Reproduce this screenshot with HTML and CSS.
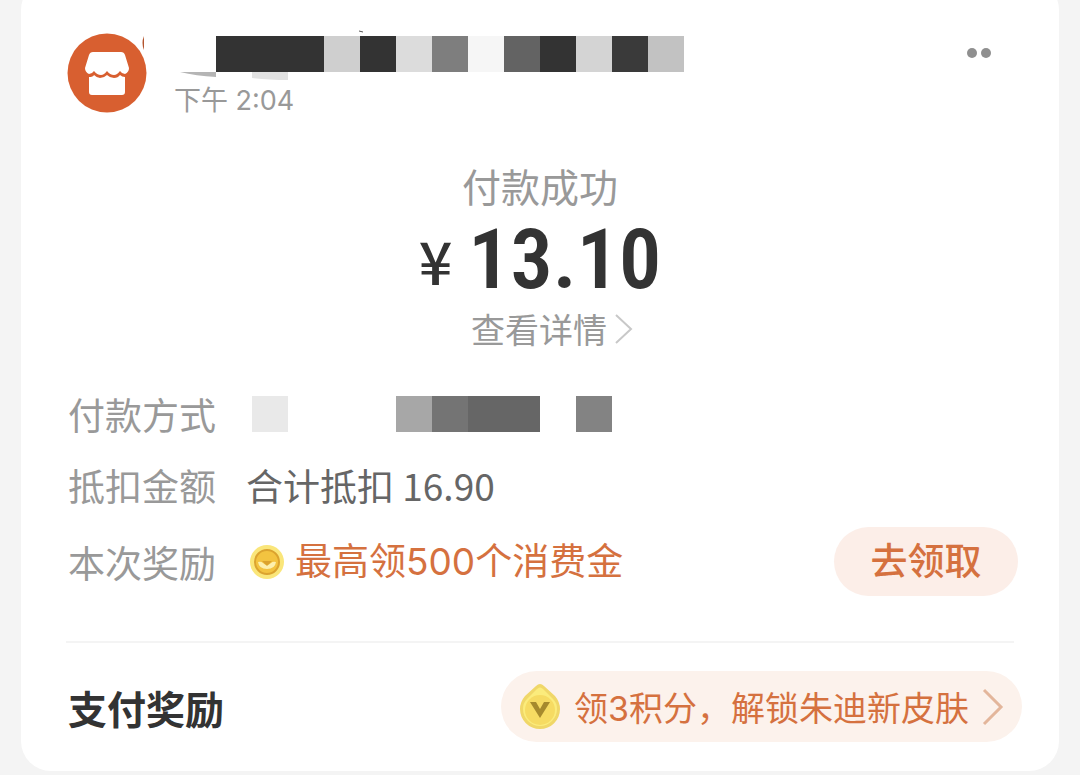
FILE: index.html
```html
<!DOCTYPE html>
<html lang="zh-CN">
<head>
    <meta charset="UTF-8">
    <meta name="viewport" content="width=device-width, initial-scale=1.0">
    <title>付款成功</title>
    <link rel="stylesheet" href="styles.css">
</head>
<body>

<main class="card">
    <header class="shop">
        <svg class="shop-logo" viewBox="0 0 80 80" aria-hidden="true">
            <circle cx="40" cy="40" r="39.5" fill="#d85f30"/>
            <path d="M26 19h28q3 0 4 3l4 13q0 4-4 6-3 0-5-3-3 4-6 4-4 0-7-4-3 4-6 4-4 0-7-4-2 3-5 3-4-2-4-6l4-13q1-3 4-3z" fill="#fff"/>
            <path d="M22 44q4 0 5-2 3 3 6 3 4 0 7-3 3 3 7 3t6-3q2 2 5 2v15q0 3-3 3H25q-3 0-3-3z" fill="#fff"/>
        </svg>
        <div class="shop-info">
            <!-- 商家名称打码 -->
            <svg class="shop-name" viewBox="0 0 510 36" role="img" aria-label="商家名称已隐藏">
                <g shape-rendering="crispEdges">
                    <rect x="42" width="108" height="36" fill="#333"/>
                    <rect x="150" width="36" height="36" fill="#cfcfcf"/>
                    <rect x="186" width="36" height="36" fill="#333"/>
                    <rect x="222" width="36" height="36" fill="#dcdcdc"/>
                    <rect x="258" width="36" height="36" fill="#7e7e7e"/>
                    <rect x="294" width="36" height="36" fill="#f6f6f6"/>
                    <rect x="330" width="36" height="36" fill="#636363"/>
                    <rect x="366" width="36" height="36" fill="#333"/>
                    <rect x="402" width="36" height="36" fill="#d4d4d4"/>
                    <rect x="438" width="36" height="36" fill="#3a3a3a"/>
                    <rect x="474" width="36" height="36" fill="#c2c2c2"/>
                </g>
                <path d="M-30 0v14q-3-7 0-14z" fill="#b4552f"/>
                <path d="M6 36h36v5q-20-1-36-5z" fill="#b5b5b5"/>
                <path d="M78 36h36v8q-20 0-36-2z" fill="#e2e2e2"/>
                <path d="M185-5l4 1" stroke="#555"/>
            </svg>
            <time class="shop-time">下午 2:04</time>
        </div>
        <button class="more" type="button" aria-label="更多">
            <i></i><i></i>
        </button>
    </header>

    <section class="pay">
        <h1 class="pay-status">付款成功</h1>
        <p class="pay-amount"><span class="yen">¥</span><span class="num">13.10</span></p>
        <a class="pay-detail" href="#">查看详情<svg viewBox="0 0 18 32" aria-hidden="true"><path d="M1 2l15 14L1 30"/></svg></a>
    </section>

    <dl class="rows">
        <div class="row">
            <dt>付款方式</dt>
            <dd>
                <svg class="pay-method" viewBox="0 0 360 36" role="img" aria-label="付款方式已隐藏" shape-rendering="crispEdges">
                    <rect width="36" height="36" fill="#e9e9e9"/>
                    <rect x="144" width="36" height="36" fill="#a7a7a7"/>
                    <rect x="180" width="36" height="36" fill="#747474"/>
                    <rect x="216" width="72" height="36" fill="#666"/>
                    <rect x="324" width="36" height="36" fill="#838383"/>
                </svg>
            </dd>
        </div>
        <div class="row">
            <dt>抵扣金额</dt>
            <dd class="deduct">合计抵扣 16.90</dd>
        </div>
        <div class="row row-reward">
            <dt>本次奖励</dt>
            <dd class="reward">
                <svg class="coin" viewBox="0 0 36 36" aria-hidden="true">
                    <circle cx="18" cy="18" r="17" fill="#fae67a"/>
                    <circle cx="18" cy="18" r="12" fill="#f3c340" stroke="#dba32f" stroke-width="2"/>
                    <path d="M9 18q3-1 5 1 4 4 8 0 2-2 5-1-1 7-9 7t-9-7z" fill="#fdf0ae"/>
                    <path d="M13 17h10l-5 5z" fill="#dba32f"/>
                </svg>
                <span>最高领500个消费金</span>
            </dd>
            <dd class="claim-cell"><button class="claim" type="button">去领取</button></dd>
        </div>
    </dl>

    <section class="bonus">
        <h2>支付奖励</h2>
        <a class="bonus-link" href="#">
            <svg class="drop" viewBox="0 0 42 48" aria-hidden="true">
                <path d="M17 3q4-4 8 0l11 10q5 6 5 13a20 20 0 0 1-40 0q0-7 5-13z" fill="#f0d768"/>
                <path d="M18 6q3-3 6 0l10 10q4 4 4 10a17 17 0 0 1-34 0q0-6 4-10z" fill="#fbec7c"/>
                <circle cx="21" cy="27" r="15" fill="#f6db62"/>
                <path d="M11 19h6l4 7 4-7h6l-10 16z" fill="#a68a2d"/>
            </svg>
            <span>领3积分，解锁朱迪新皮肤</span>
            <svg class="arrow" viewBox="0 0 22 38" aria-hidden="true"><path d="M2 2l17 17L2 36"/></svg>
        </a>
    </section>
</main>

</body>
</html>
```
FILE: styles.css
```css
* {
    box-sizing: border-box;
}

body {
    margin: 0;
    background: #f4f4f4;
    color: #333;
    font-family: "Noto Sans CJK SC", sans-serif;
    overflow: hidden;
}

h1, h2, p, dl, dd {
    margin: 0;
}

a {
    text-decoration: none;
}

button {
    border: 0;
    font-family: inherit;
    cursor: pointer;
}

svg {
    display: block;
    flex: none;
}

/* 卡片顶部滚出屏幕 */
.card {
    margin: -20px 21px 0;
    padding: 53px 0 29px;
    border-radius: 30px;
    background: #fff;
}

/* 商家信息 */
.shop {
    display: flex;
    align-items: flex-start;
    padding: 0 68px 0 46px;
}

.shop-logo {
    width: 80px;
    height: 80px;
}

.shop-info {
    flex: 1;
    padding-top: 3px;
    margin-left: 27px;
}

.shop-name {
    width: 510px;
    height: 36px;
    overflow: visible;
}

.shop-time {
    display: block;
    margin-top: 13px;
    color: #999;
    font-family: Inter, "Noto Sans CJK SC", sans-serif;
    font-size: 27px;
    line-height: 32px;
}

.more {
    display: flex;
    gap: 4px;
    margin-top: 15px;
    padding: 0;
    background: none;
}

.more i {
    width: 10px;
    height: 10px;
    border-radius: 50%;
    background: #8f8f8f;
}

/* 付款结果 */
.pay {
    display: flex;
    flex-direction: column;
    align-items: center;
    margin-top: 44px;
}

.pay-status {
    color: #999;
    font-size: 39px;
    font-weight: 400;
    line-height: 48px;
}

.pay-amount {
    display: flex;
    align-items: center;
    gap: 16px;
    margin-top: 4px;
    line-height: 94px;
}

.yen {
    font-size: 59px;
    font-weight: 500;
    line-height: 60px;
}

.num {
    font-family: "Roboto Condensed", Roboto, sans-serif;
    font-size: 84px;
    font-weight: 600;
}

.pay-detail {
    display: flex;
    align-items: center;
    gap: 8px;
    margin-left: 24px;
    color: #999;
    font-size: 34px;
    line-height: 44px;
}

.pay-detail svg {
    width: 18px;
    height: 32px;
    fill: none;
    stroke: #c8c8c8;
    stroke-width: 2;
}

/* 明细 */
.rows {
    margin-top: 39px;
    padding: 0 41px 0 47px;
    font-size: 37px;
    line-height: 48px;
}

.row {
    display: flex;
    align-items: center;
    margin-bottom: 23px;
}

.row dt {
    width: 178px;
    color: #999;
}

.row-reward {
    margin: -5px 0 0;
}

.pay-method {
    width: 360px;
    height: 36px;
    margin-left: 6px;
}

.deduct {
    color: #666;
}

.reward {
    display: flex;
    align-items: center;
    gap: 10px;
    padding-left: 3px;
    color: #d5713f;
    font-family: Inter, "Noto Sans CJK SC", sans-serif;
}

.coin {
    width: 36px;
    height: 36px;
}

.claim-cell {
    margin-left: auto;
}

.claim {
    display: block;
    width: 184px;
    height: 69px;
    padding: 0 0 6px;
    border-radius: 35px;
    background: #fceee8;
    color: #d5713f;
    font-size: 37px;
    font-weight: 500;
}

/* 支付奖励 */
.bonus {
    display: flex;
    align-items: center;
    justify-content: space-between;
    margin: 45px 45px 0;
    padding-top: 28px;
    border-top: 2px solid #f4f4f4;
}

.bonus h2 {
    margin-left: 2px;
    font-size: 39px;
    font-weight: 700;
    line-height: 48px;
}

.bonus-link {
    display: flex;
    align-items: center;
    height: 71px;
    margin-right: -8px;
    padding: 0 18px;
    border-radius: 36px;
    background: #fcf2ec;
    color: #d5713f;
    font-family: Inter, "Noto Sans CJK SC", sans-serif;
    font-size: 34px;
}

.drop {
    width: 42px;
    height: 48px;
    margin-right: 13px;
}

.arrow {
    width: 22px;
    height: 38px;
    margin-left: 13px;
    fill: none;
    stroke: #e3b69b;
    stroke-width: 3;
}
```
